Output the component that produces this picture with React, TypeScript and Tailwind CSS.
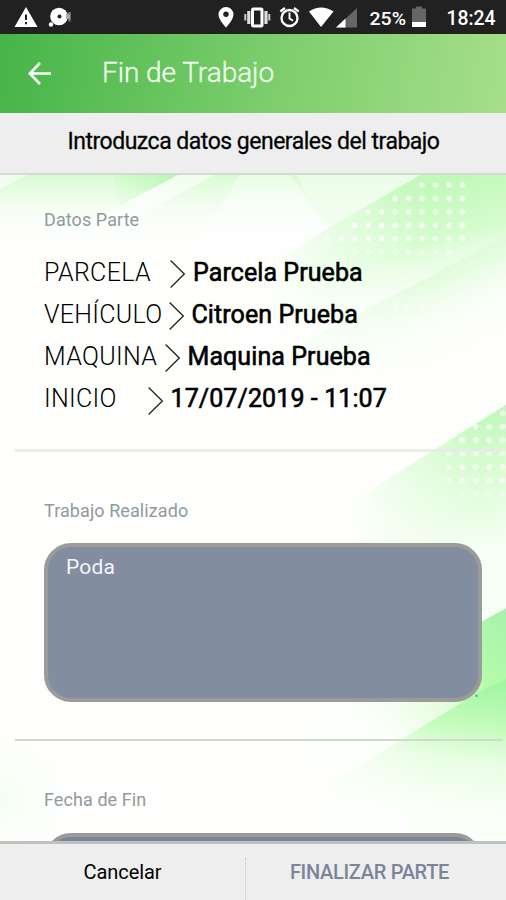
import React from "react";

const rows = [
  { label: "PARCELA", value: "Parcela Prueba", labelClass: "w-[107px]", gap: "w-[19px]", valueClass: "tracking-[0.08px]" },
  { label: "VEHÍCULO", value: "Citroen Prueba", labelClass: "w-[118px]", gap: "w-[6.5px]", valueClass: "tracking-[0.08px]" },
  { label: "MAQUINA", value: "Maquina Prueba", labelClass: "w-[114px]", gap: "w-[6.5px]", valueClass: "tracking-[0.08px]" },
  { label: "INICIO", value: "17/07/2019 - 11:07", labelClass: "w-[73px]", gap: "w-[30.5px]", valueClass: "tracking-[0.1px]" },
];

const Backdrop = () => (
  <svg className="absolute inset-0 w-full h-full" viewBox="0 175 506 667" preserveAspectRatio="none">
    <defs>
      <pattern id="dots" x="415.3" y="178.3" width="13.45" height="13.45" patternUnits="userSpaceOnUse">
        <circle cx="6.7" cy="6.7" r="2.6" fill="#fff" />
      </pattern>
      <linearGradient id="top" x1="0" y1="175" x2="0" y2="245" gradientUnits="userSpaceOnUse">
        <stop offset="0" stopColor="#d9fbd3" />
        <stop offset="1" stopColor="#fff" stopOpacity="0" />
      </linearGradient>
      <linearGradient id="wedge" x1="170" y1="172" x2="125" y2="222" gradientUnits="userSpaceOnUse">
        <stop offset="0" stopColor="#b6f6b3" />
        <stop offset="1" stopColor="#d6fbd1" stopOpacity="0" />
      </linearGradient>
      <linearGradient id="band1" x1="420" y1="185" x2="455" y2="310" gradientUnits="userSpaceOnUse">
        <stop offset="0" stopColor="#c0f9b8" />
        <stop offset="0.45" stopColor="#d6fccf" />
        <stop offset="1" stopColor="#f3fff0" stopOpacity="0" />
      </linearGradient>
      <linearGradient id="band2" x1="430" y1="275" x2="465" y2="350" gradientUnits="userSpaceOnUse">
        <stop offset="0" stopColor="#dffcd9" stopOpacity="0.9" />
        <stop offset="1" stopColor="#fff" stopOpacity="0" />
      </linearGradient>
      <linearGradient id="band3" x1="460" y1="430" x2="498" y2="545" gradientUnits="userSpaceOnUse">
        <stop offset="0" stopColor="#c3fabc" />
        <stop offset="0.45" stopColor="#dcfdd6" />
        <stop offset="1" stopColor="#f6fff4" />
      </linearGradient>
      <linearGradient id="band4" x1="500" y1="610" x2="380" y2="740" gradientUnits="userSpaceOnUse">
        <stop offset="0" stopColor="#a8f3aa" />
        <stop offset="0.35" stopColor="#b5fbab" />
        <stop offset="0.6" stopColor="#e4fedd" />
        <stop offset="1" stopColor="#fcfffb" />
      </linearGradient>
      <linearGradient id="band5" x1="495" y1="685" x2="480" y2="815" gradientUnits="userSpaceOnUse">
        <stop offset="0" stopColor="#a2f5a2" />
        <stop offset="0.35" stopColor="#c6fcbe" />
        <stop offset="0.6" stopColor="#e8fee3" />
        <stop offset="1" stopColor="#fbfff9" />
      </linearGradient>
      <linearGradient id="fadeLeft" x1="270" y1="0" x2="430" y2="0" gradientUnits="userSpaceOnUse">
        <stop offset="0" stopColor="#000" />
        <stop offset="1" stopColor="#fff" />
      </linearGradient>
      <linearGradient id="fadeLow" x1="350" y1="0" x2="480" y2="0" gradientUnits="userSpaceOnUse">
        <stop offset="0" stopColor="#000" />
        <stop offset="1" stopColor="#fff" />
      </linearGradient>
      <mask id="left" maskUnits="userSpaceOnUse" x="0" y="175" width="506" height="667">
        <rect x="0" y="175" width="506" height="667" fill="url(#fadeLeft)" />
      </mask>
      <mask id="low" maskUnits="userSpaceOnUse" x="0" y="175" width="506" height="667">
        <rect x="0" y="175" width="506" height="667" fill="url(#fadeLow)" />
      </mask>
      <radialGradient id="corner" cx="0" cy="800" r="78" gradientUnits="userSpaceOnUse">
        <stop offset="0" stopColor="#f4fef0" />
        <stop offset="1" stopColor="#fff" stopOpacity="0" />
      </radialGradient>
    </defs>
    <rect x="0" y="175" width="506" height="667" fill="#fefffd" />
    <rect x="0" y="175" width="506" height="75" fill="url(#top)" />
    <path d="M0 175H28L0 189Z" fill="#fff" opacity="0.6" />
    <path d="M115 175H178L115 208Z" fill="url(#wedge)" />
    <path d="M178 175H214L120 226L90 222Z" fill="#fff" opacity="0.6" />
    <path d="M297 175H420L330 229L315 211Z" fill="#f0feed" opacity="0.7" />
    <path d="M240 175H290L322 222L270 255H190Z" fill="#fff" opacity="0.4" />
    <g mask="url(#left)">
      <path d="M420 175H506V350H270V263Z" fill="url(#band1)" />
      <path d="M450 266L506 236V370H290V350Z" fill="url(#band2)" />
    </g>
    <g mask="url(#low)">
      <path d="M506 405L430 453L340 510L290 545V615H506Z" fill="url(#band3)" />
    </g>
    <g mask="url(#left)">
      <path d="M506 609L440 645L330 700L250 770H506Z" fill="url(#band4)" />
      <path d="M506 680L480 692L410 735L330 785L300 842H506Z" fill="url(#band5)" />
    </g>
    <path d="M415 179H470V192H415ZM388 192H470V205H388ZM361 205H470V219H361ZM348 219H470V232H348ZM321 232H470V245H321Z" fill="url(#dots)" opacity="0.75" />
    <path d="M348 245H456V259H348ZM388 300H430V313H388ZM361 313H430V340H361Z" fill="url(#dots)" opacity="0.4" />
    <path d="M496 407H506V420H496ZM469 420H506V434H469ZM456 434H506V487H456Z" fill="url(#dots)" opacity="0.85" />
    <path d="M442 448H456V487H442ZM456 487H506V500H456Z" fill="url(#dots)" opacity="0.45" />
    <rect x="0" y="720" width="80" height="122" fill="url(#corner)" />
    <circle cx="476.5" cy="696.5" r="1.3" fill="#7fa87f" />
  </svg>
);

const StatusBar = () => (
  <div className="h-[34px] shrink-0 bg-[#212121] text-white">
    <svg className="w-full h-full" viewBox="0 0 506 34">
      <path d="M26 7L37.5 27H14.5Z" fill="#fff" />
      <path d="M26 14.5V20M26 22V24.3" stroke="#212121" strokeWidth="2" />
      <circle cx="59" cy="16.5" r="8.8" fill="#fff" />
      <circle cx="59.5" cy="16.5" r="2" fill="#212121" />
      <circle cx="51" cy="24.5" r="2.2" fill="#fff" />
      <path d="M66 13.5H70.5V19H66Z" fill="#aaa" />
      <path d="M69.5 12V15M69.5 18V21.5" stroke="#888" strokeWidth="2" />
      <path d="M226 7a7.5 7.5 0 0 0-7.5 7.5C218.5 20 226 27.5 226 27.5S233.5 20 233.5 14.5A7.5 7.5 0 0 0 226 7Z" fill="#fff" />
      <circle cx="226" cy="14.3" r="2.7" fill="#212121" />
      <rect x="252.5" y="9" width="9.5" height="17" rx="1" fill="none" stroke="#fff" strokeWidth="3" />
      <path d="M248.8 11V24M266 11V24" stroke="#ddd" strokeWidth="3.2" />
      <path d="M245.3 14V20.5M269.3 14V20.5" stroke="#ccc" strokeWidth="2" />
      <circle cx="289.5" cy="18" r="8" fill="none" stroke="#fff" strokeWidth="2.3" />
      <path d="M289.5 12.5V18.5L293 20.8" fill="none" stroke="#fff" strokeWidth="1.9" />
      <path d="M280.3 11.5L285 8M298.7 11.5L294 8" stroke="#fff" strokeWidth="2.2" />
      <path d="M309 11.5Q321 3.5 333.5 11.5L321 27Z" fill="#fff" />
      <path d="M357 8V27.5H336Z" fill="#666" />
      <path d="M345.5 18.5V27.5H336Z" fill="#fff" />
      <text x="369.5" y="25" fill="#fff" fontFamily="Roboto, sans-serif" fontWeight="500" fontSize="19" textLength="36.5" lengthAdjust="spacingAndGlyphs">25%</text>
      <path d="M416 6.5H422V8.5H426V27H412V8.5H416Z" fill="#666" />
      <path d="M412 22H426V27H412Z" fill="#fff" />
      <text x="446.5" y="25" fill="#fff" fontFamily="Roboto, sans-serif" fontWeight="500" fontSize="20" textLength="49" lengthAdjust="spacingAndGlyphs">18:24</text>
    </svg>
  </div>
);

const App = () => {
  return (
    <div className="w-[506px] h-[900px] flex flex-col overflow-hidden bg-white font-[Roboto,sans-serif] text-black">
      <StatusBar />

      <header className="h-[79px] shrink-0 flex items-center bg-linear-[100deg,#46b449_0%,#7bcd6c_52%,#a6df88_100%]">
        <svg className="ml-[28px] mb-px w-6 h-6" viewBox="0 0 24 24" fill="none" stroke="#fff" strokeWidth="2.6">
          <path d="M23 12.5H2M12 2L1.8 12.5L12 23" />
        </svg>
        <h1 className="ml-[50px] mb-[2px] text-[28px] leading-8 font-light text-[#f4fff0] tracking-[-0.05px] whitespace-nowrap [-webkit-text-stroke:0.3px_#f4fff0]">
          Fin de Trabajo
        </h1>
      </header>

      <div className="h-[62px] shrink-0 pb-px pl-px flex items-center justify-center bg-[#eeeeee] border-b-2 border-[#d3dad1]">
        <h2 className="text-[23px] font-normal tracking-[-0.5px] whitespace-nowrap [-webkit-text-stroke:0.3px_#111]">
          Introduzca datos generales del trabajo
        </h2>
      </div>

      <main className="relative flex-1 min-h-0 overflow-hidden">
        <Backdrop />
        <div className="relative pl-[15px] pr-[3px]">
          <section className="h-[277px] pl-[29px] pt-[33px] border-b-3 border-[#e8ece7]">
            <h3 className="text-[18px] leading-6 text-[#8f9a9f] tracking-[0.08px]">Datos Parte</h3>
            <div className="mt-[19.5px] flex flex-col">
              {rows.map((row) => (
                <div key={row.label} className="h-[42.2px] flex items-center whitespace-nowrap text-[25px]">
                  <span className={`${row.labelClass} font-light tracking-[0.3px]`}>{row.label}</span>
                  <span className={row.gap} />
                  <svg className="w-[15px] h-7 mt-[3px] mr-[8px]" viewBox="0 0 15 28" fill="none" stroke="#222" strokeWidth="1.3">
                    <path d="M0.6 0.5L14.3 14L0.6 27.5" />
                  </svg>
                  <span className={`${row.valueClass} font-normal [-webkit-text-stroke:0.6px_#000]`}>{row.value}</span>
                </div>
              ))}
            </div>
          </section>

          <section className="h-[289px] pl-[29px] pr-[21px] pt-[46.5px] border-b-2 border-[#d0d8d0]">
            <h3 className="text-[18px] leading-6 text-[#92999f] tracking-[0.08px]">Trabajo Realizado</h3>
            <div className="mt-[20.5px] h-[159px] rounded-[27px] border-4 border-[#9b9b9b] bg-[#828da0] pl-[18px] pt-[4px] text-[21px] leading-8 text-[#f2f5fb] tracking-[0.2px]">
              Poda
            </div>
          </section>

          <section className="pl-[29px] pr-[21px] pt-[47px]">
            <h3 className="text-[18px] leading-6 text-[#92999f] tracking-[0.08px]">Fecha de Fin</h3>
            <div className="mt-[21px] h-[60px] rounded-[27px] border-4 border-[#9b9b9b] bg-[#7c8599]" />
          </section>
        </div>
      </main>

      <footer className="h-[59px] shrink-0 flex items-center bg-[#eeeeee] border-t-3 border-[#bfc2c0] text-[20px]">
        <button className="w-[245px] h-full tracking-[-0.05px]">Cancelar</button>
        <span className="h-[42px] self-end border-l border-dotted border-[#b9c8c6]" />
        <button className="flex-1 h-full pr-[13px] font-medium text-[#7b8599] tracking-[-0.3px] whitespace-nowrap">FINALIZAR PARTE</button>
      </footer>
    </div>
  );
};

export default App;
